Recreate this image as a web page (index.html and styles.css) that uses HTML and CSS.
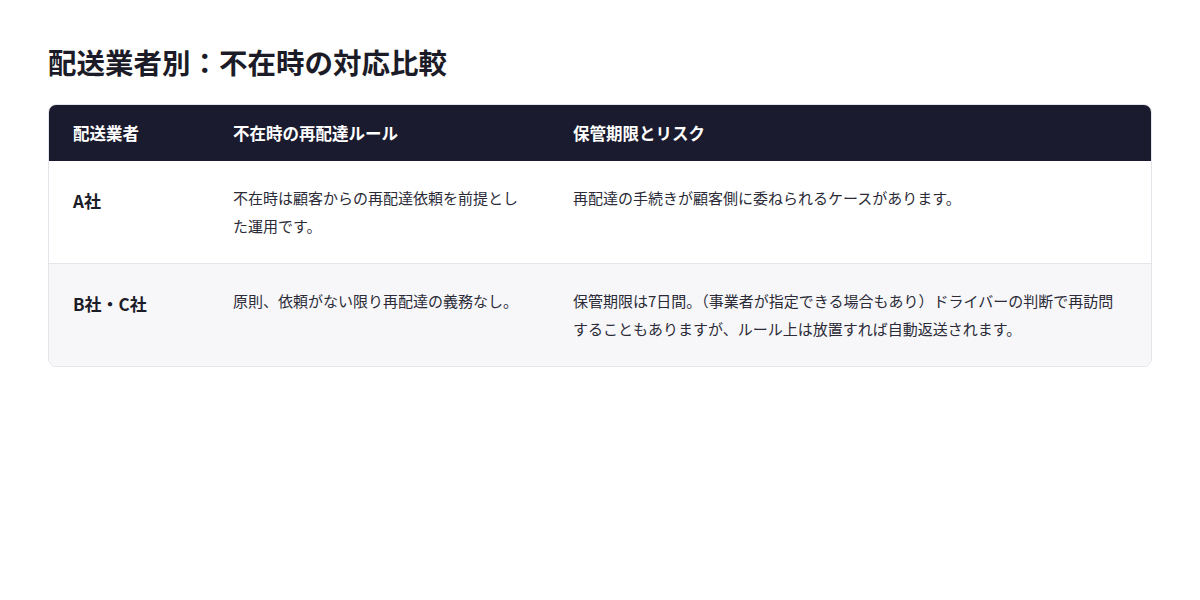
FILE: index.html
```html
<html>
	<head>
		<meta charset="utf-8">
		<title>配送業者別：不在時の対応比較</title>
		<link rel="stylesheet" href="styles.css">
	</head>
	<body>
		<div id="content">
			<h1>配送業者別：不在時の対応比較</h1>
			<div class="tablewrap">
				<table class="compare">
					<thead>
						<tr>
							<th class="c1">配送業者</th>
							<th class="c2">不在時の再配達ルール</th>
							<th class="c3">保管期限とリスク</th>
						</tr>
					</thead>
					<tbody>
						<tr>
							<td class="name">A社</td>
							<td>不在時は顧客からの再配達依頼を前提とした運用です。</td>
							<td>再配達の手続きが顧客側に委ねられるケースがあります。</td>
						</tr>
						<tr class="alt">
							<td class="name">B社・C社</td>
							<td>原則、依頼がない限り再配達の義務なし。</td>
							<td>保管期限は7日間。（事業者が指定できる場合もあり）ドライバーの判断で再訪問することもありますが、ルール上は放置すれば自動返送されます。</td>
						</tr>
					</tbody>
				</table>
			</div>
		</div>
	</body>
</html>
```

FILE: styles.css
```css
html, body {margin:0;padding:0;}
body {
	font-family:"Noto Sans CJK JP", "Noto Sans", sans-serif;
	color:#2b2b38;
	background:#fff;
}
#content {
	padding:42px 48px;
}
h1 {
	margin:0 0 22px 0;
	font-size:28.5px;
	line-height:40px;
	font-weight:700;
	color:#1c1c28;
}
.tablewrap {
	border:1px solid #e4e5ea;
	border-radius:8px;
	overflow:hidden;
}
.compare {
	width:100%;
	border-collapse:collapse;
	table-layout:fixed;
}
.compare th {
	background:#1b1b2f;
	color:#fff;
	font-size:16.5px;
	font-weight:700;
	text-align:left;
	line-height:20px;
	padding:18px 24px 18px 24px;
}
.c1 {width:112px;}
.c2 {width:292px;}
.compare td {
	font-size:15px;
	line-height:28px;
	padding:23px 24px;
	vertical-align:top;
	border-top:1px solid #e6e7ec;
}
.compare tbody tr:first-child td {
	border-top:none;
}
.compare td.name {
	font-size:17px;
	line-height:34px;
	font-weight:700;
	color:#1c1c28;
}
.alt td {
	background:#f7f7f9;
}
```
